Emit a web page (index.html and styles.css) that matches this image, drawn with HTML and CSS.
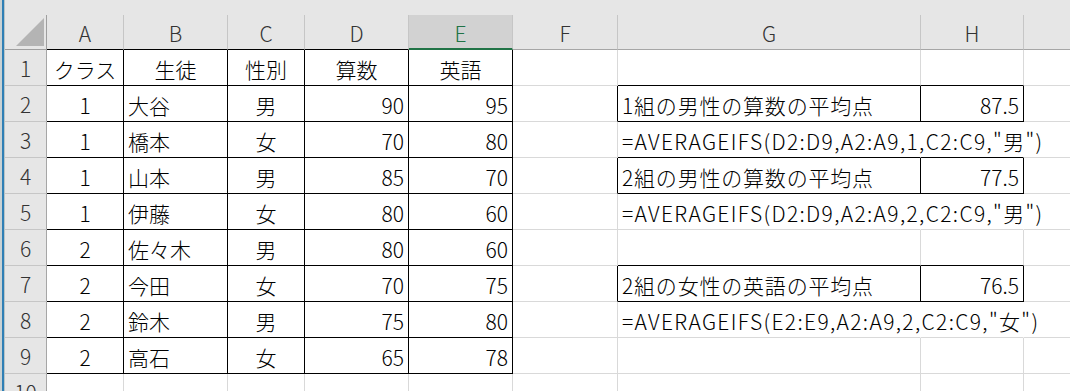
FILE: index.html
```html
<!DOCTYPE html>
<html lang="ja">
<head>
<meta charset="utf-8">
<title>AVERAGEIFS</title>
<link rel="stylesheet" href="styles.css">
</head>
<body>
<div class="app">
  <div class="edge"></div>
  <div class="sheet">
    <div class="topbar"></div>
    <div class="grid">
      <div class="corner"><svg width="42" height="35" viewBox="0 0 42 35"><polygon points="11,31 39,31 39,3" fill="#b4b4b4"/></svg></div>
      <div class="ch kh">A</div>
      <div class="ch kh">B</div>
      <div class="ch kh">C</div>
      <div class="ch kh">D</div>
      <div class="ch sel">E</div>
      <div class="ch">F</div>
      <div class="ch">G</div>
      <div class="ch">H</div>
      <div class="ch"></div>

      <div class="rh">1</div>
      <div class="c bk ctr">クラス</div>
      <div class="c bk ctr">生徒</div>
      <div class="c bk ctr">性別</div>
      <div class="c bk ctr">算数</div>
      <div class="c bk ctr">英語</div>
      <div class="c"></div>
      <div class="c kb"></div>
      <div class="c kb"></div>
      <div class="c"></div>

      <div class="rh">2</div>
      <div class="c bk ctr">1</div>
      <div class="c bk">大谷</div>
      <div class="c bk ctr">男</div>
      <div class="c bk num">90</div>
      <div class="c bk num">95</div>
      <div class="c kr"></div>
      <div class="c bk lb">1組の男性の算数の平均点</div>
      <div class="c bk num">87.5</div>
      <div class="c"></div>

      <div class="rh">3</div>
      <div class="c bk ctr">1</div>
      <div class="c bk">橋本</div>
      <div class="c bk ctr">女</div>
      <div class="c bk num">70</div>
      <div class="c bk num">80</div>
      <div class="c"></div>
      <div class="c kb nr fx">=AVERAGEIFS(D2:D9,A2:A9,1,C2:C9,"男")</div>
      <div class="c kb nr"></div>
      <div class="c nr"></div>

      <div class="rh">4</div>
      <div class="c bk ctr">1</div>
      <div class="c bk">山本</div>
      <div class="c bk ctr">男</div>
      <div class="c bk num">85</div>
      <div class="c bk num">70</div>
      <div class="c kr"></div>
      <div class="c bk lb">2組の男性の算数の平均点</div>
      <div class="c bk num">77.5</div>
      <div class="c"></div>

      <div class="rh">5</div>
      <div class="c bk ctr">1</div>
      <div class="c bk">伊藤</div>
      <div class="c bk ctr">女</div>
      <div class="c bk num">80</div>
      <div class="c bk num">60</div>
      <div class="c"></div>
      <div class="c nr fx">=AVERAGEIFS(D2:D9,A2:A9,2,C2:C9,"男")</div>
      <div class="c nr"></div>
      <div class="c nr"></div>

      <div class="rh">6</div>
      <div class="c bk ctr">2</div>
      <div class="c bk">佐々木</div>
      <div class="c bk ctr">男</div>
      <div class="c bk num">80</div>
      <div class="c bk num">60</div>
      <div class="c"></div>
      <div class="c kb"></div>
      <div class="c kb"></div>
      <div class="c"></div>

      <div class="rh">7</div>
      <div class="c bk ctr">2</div>
      <div class="c bk">今田</div>
      <div class="c bk ctr">女</div>
      <div class="c bk num">70</div>
      <div class="c bk num">75</div>
      <div class="c kr"></div>
      <div class="c bk lb">2組の女性の英語の平均点</div>
      <div class="c bk num">76.5</div>
      <div class="c"></div>

      <div class="rh">8</div>
      <div class="c bk ctr">2</div>
      <div class="c bk">鈴木</div>
      <div class="c bk ctr">男</div>
      <div class="c bk num">75</div>
      <div class="c bk num">80</div>
      <div class="c"></div>
      <div class="c nr fx">=AVERAGEIFS(E2:E9,A2:A9,2,C2:C9,"女")</div>
      <div class="c nr"></div>
      <div class="c nr"></div>

      <div class="rh">9</div>
      <div class="c bk ctr">2</div>
      <div class="c bk">高石</div>
      <div class="c bk ctr">女</div>
      <div class="c bk num">65</div>
      <div class="c bk num">78</div>
      <div class="c"></div>
      <div class="c"></div>
      <div class="c"></div>
      <div class="c"></div>

      <div class="rh">10</div>
      <div class="c"></div>
      <div class="c"></div>
      <div class="c"></div>
      <div class="c"></div>
      <div class="c"></div>
      <div class="c"></div>
      <div class="c"></div>
      <div class="c"></div>
      <div class="c"></div>
    </div>
  </div>
</div>
</body>
</html>
```

FILE: styles.css
```css
html, body {
  margin: 0;
  padding: 0;
  background: #ffffff;
  overflow: hidden;
}

body {
  width: 1070px;
  height: 391px;
  font-family: "Noto Sans CJK JP", "Noto Sans", sans-serif;
  font-weight: 300;
  color: #000000;
}

.app {
  display: flex;
  height: 391px;
  overflow: hidden;
}

.edge {
  width: 5px;
  flex: none;
  background: linear-gradient(to right, #c9d2d4 0, #c9d2d4 2px, #2f7fb5 2px, #2f7fb5 4px, #b9c4c6 4px);
}

.sheet {
  flex: 1;
  display: flex;
  flex-direction: column;
  min-width: 0;
}

.topbar {
  height: 15px;
  flex: none;
  background: #e6e6e6;
}

.grid {
  display: grid;
  grid-template-columns: 42px 77px 104px 77px 104px 104px 105px 303px 103px 80px;
  grid-template-rows: 35px;
  grid-auto-rows: 36px;
}

.corner {
  background: #e6e6e6;
  border-right: 1px solid #9f9f9f;
  border-bottom: 1px solid #9f9f9f;
  box-sizing: border-box;
}

.corner svg {
  display: block;
}

.ch {
  background: #e6e6e6;
  color: #333333;
  font-size: 21px;
  display: flex;
  align-items: center;
  justify-content: center;
  border-right: 1px solid #c6c6c6;
  border-bottom: 1px solid #a6a6a6;
  box-sizing: border-box;
  padding-top: 2px;
}

.ch.kh {
  border-bottom-color: #000000;
}

.ch.sel {
  background: #d2d2d2;
  color: #217346;
  border-bottom: 2px solid #217346;
}

.rh {
  background: #e6e6e6;
  color: #333333;
  font-size: 21px;
  display: flex;
  align-items: center;
  justify-content: center;
  border-right: 1px solid #a6a6a6;
  border-bottom: 1px solid #c6c6c6;
  box-sizing: border-box;
  padding-top: 1px;
}

.c {
  font-size: 21px;
  display: flex;
  align-items: center;
  padding: 2px 4px 0 4px;
  border-right: 1px solid #d9d9d9;
  border-bottom: 1px solid #d9d9d9;
  box-sizing: border-box;
  white-space: nowrap;
  min-width: 0;
}

.c.fx {
  letter-spacing: 1.35px;
}

.c.lb {
  letter-spacing: 0.8px;
}

.c.ctr {
  justify-content: center;
}

.c.num {
  justify-content: flex-end;
}

.c.bk {
  border-right-color: #000000;
  border-bottom-color: #000000;
}

.c.kb {
  border-bottom-color: #000000;
}

.c.kr {
  border-right-color: #000000;
}

.c.nr {
  border-right-color: transparent;
}
```
